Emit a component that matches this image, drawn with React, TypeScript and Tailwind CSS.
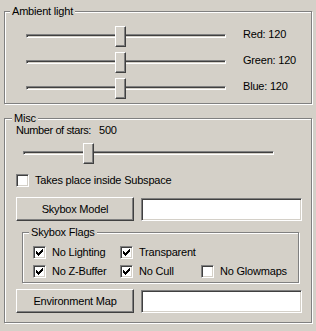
import React from "react";

const etched =
  "relative border border-[#808080] shadow-[inset_1px_1px_0_#ffffff,1px_1px_0_#ffffff]";
const sunken =
  "border border-t-[#808080] border-l-[#808080] border-r-white border-b-white shadow-[inset_1px_1px_0_#404040,inset_-1px_-1px_0_#d4d0c8] bg-white";
const raised =
  "border border-t-white border-l-white border-r-[#404040] border-b-[#404040] shadow-[inset_-1px_-1px_0_#808080] bg-[#d4d0c8]";

function Slider({ cls, thumbCls }: { cls: string; thumbCls: string }) {
  return (
    <div className={`relative h-[21px] ${cls}`}>
      <div className="absolute left-0 right-0 top-[8px] h-[4px] border border-t-[#808080] border-l-[#808080] border-r-white border-b-white bg-[#d4d0c8] shadow-[inset_1px_1px_0_#404040]" />
      <div className={`absolute top-0 h-[21px] w-[11px] ${raised} ${thumbCls}`} />
    </div>
  );
}

function Check({ checked }: { checked?: boolean }) {
  return (
    <div className={`relative w-[13px] h-[13px] shrink-0 ${sunken}`}>
      {checked && (
        <svg
          className="absolute left-[2px] top-[2px]"
          width="7"
          height="7"
          viewBox="0 0 7 7"
          shapeRendering="crispEdges"
        >
          <path
            fill="#000"
            d="M0 2h1v3H0zM1 3h1v3H1zM2 4h1v3H2zM3 3h1v3H3zM4 2h1v3H4zM5 1h1v3H5zM6 0h1v3H6z"
          />
        </svg>
      )}
    </div>
  );
}

function CheckRow({
  checked,
  label,
  cls = "",
}: {
  checked?: boolean;
  label: string;
  cls?: string;
}) {
  return (
    <div className={`flex items-center h-[13px] ${cls}`}>
      <Check checked={checked} />
      <span className="ml-[6px] whitespace-nowrap">{label}</span>
    </div>
  );
}

function ButtonRow({ label, cls }: { label: string; cls: string }) {
  return (
    <div className={`flex items-start ml-[11px] ${cls}`}>
      <div
        className={`w-[118px] h-[24px] flex items-center justify-center ${raised}`}
      >
        {label}
      </div>
      <div className={`ml-[7px] mt-[1px] w-[161px] h-[23px] ${sunken}`} />
    </div>
  );
}

function Title({ text, cls }: { text: string; cls: string }) {
  return (
    <span
      className={`absolute -top-[7px] ${cls} bg-[#d4d0c8] px-[2px] leading-[13px] whitespace-nowrap`}
    >
      {text}
    </span>
  );
}

export default function App() {
  return (
    <div className="w-[316px] h-[331px] bg-[#d4d0c8] overflow-hidden font-['Liberation_Sans',Arial,sans-serif] text-[11px] leading-[13px] tracking-[-0.2px] text-black pt-[11px] pl-[4px]">
      {/* Ambient light */}
      <div className={`${etched} w-[308px] h-[93px] pt-[14px] pl-[21px]`}>
        <Title text="Ambient light" cls="left-[5px]" />
        <div className="flex flex-col gap-[5px]">
          <div className="flex items-start">
            <Slider cls="w-[200px]" thumbCls="left-[89px]" />
            <span className="ml-[17px] mt-[2px]">Red: 120</span>
          </div>
          <div className="flex items-start">
            <Slider cls="w-[200px]" thumbCls="left-[89px]" />
            <span className="ml-[17px] mt-[2px]">Green: 120</span>
          </div>
          <div className="flex items-start">
            <Slider cls="w-[200px]" thumbCls="left-[89px]" />
            <span className="ml-[17px] mt-[2px]">Blue: 120</span>
          </div>
        </div>
      </div>

      {/* Misc */}
      <div className={`${etched} mt-[14px] w-[308px] h-[205px]`}>
        <Title text="Misc" cls="left-[7px]" />
        <div className="flex ml-[11px] mt-[5px]">
          <span className="w-[83px] whitespace-nowrap tracking-[-0.4px]">Number of stars:</span>
          <span>500</span>
        </div>
        <Slider cls="ml-[18px] mt-[6px] w-[251px]" thumbCls="left-[60px]" />
        <CheckRow label="Takes place inside Subspace" cls="ml-[11px] mt-[10px]" />
        <ButtonRow label="Skybox Model" cls="mt-[10px]" />

        {/* Skybox Flags */}
        <div className={`${etched} ml-[17px] mt-[11px] w-[277px] h-[51px] pt-[13px] pl-[10px]`}>
          <Title text="Skybox Flags" cls="left-[6px]" />
          <div className="grid grid-cols-[87px_81px_auto] gap-y-[6px]">
            <CheckRow checked label="No Lighting" />
            <CheckRow checked label="Transparent" />
            <div />
            <CheckRow checked label="No Z-Buffer" />
            <CheckRow checked label="No Cull" />
            <CheckRow label="No Glowmaps" />
          </div>
        </div>

        <ButtonRow label="Environment Map" cls="mt-[6px]" />
      </div>
    </div>
  );
}
